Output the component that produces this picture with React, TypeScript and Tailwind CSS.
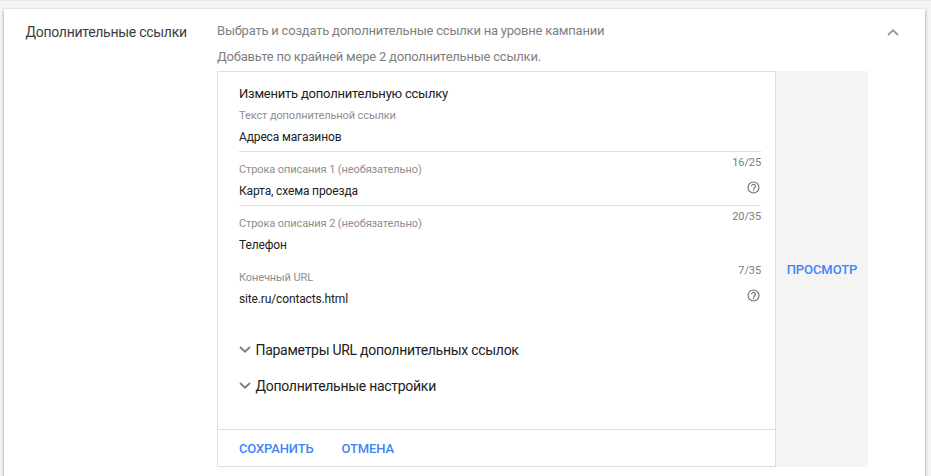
type FieldProps = {
  label: string;
  value: string;
  counter?: string;
  help?: boolean;
  line?: boolean;
};

function HelpIcon() {
  return (
    <svg className="h-[13px] w-[13px]" viewBox="0 0 13 13" fill="none" stroke="#6c6c6c">
      <circle cx="6.5" cy="6.5" r="5.5" strokeWidth="1.1" />
      <path d="M4.6 5.3a1.9 1.9 0 1 1 3.1 1.4c-.8.6-1.2 1-1.2 1.7" strokeWidth="1.1" />
      <path d="M6.5 9.1v1.1" strokeWidth="1.2" />
    </svg>
  );
}

function Chevron({ up = false }: { up?: boolean }) {
  return (
    <svg
      className={up ? "h-[7px] w-[12px] rotate-180" : "h-[7px] w-[12px]"}
      viewBox="0 0 12 7"
      fill="none"
      stroke={up ? "#9a9a9a" : "#7c7c7c"}
      strokeWidth="1.8"
    >
      <path d="M1 1l5 4.7 5-4.7" />
    </svg>
  );
}

function Field({ label, value, counter, help, line }: FieldProps) {
  return (
    <div className={`flex h-[54px] justify-between border-b ${line ? "border-[#dedede]" : "border-transparent"}`}>
      <div>
        <div className="mt-[10px] text-[11px] leading-4 tracking-[-0.1px] text-[#8e8e8e]">{label}</div>
        <div className="mt-[5px] text-[12px] leading-4 tracking-[-0.14px] text-[#212121]">{value}</div>
      </div>
      <div className="flex flex-col items-end">
        <div className="mt-[3px] h-4 text-[11px] leading-4 tracking-[-0.1px] text-[#7c7c7c]">{counter}</div>
        {help && (
          <div className="mt-[10px] mr-px">
            <HelpIcon />
          </div>
        )}
      </div>
    </div>
  );
}

function Expander({ title }: { title: string }) {
  return (
    <div className="flex h-9 items-center">
      <div className="-mt-[2px]">
        <Chevron />
      </div>
      <span className="ml-[4.5px] text-[14px] leading-5 tracking-[-0.28px] text-[#212121]">{title}</span>
    </div>
  );
}

export default function App() {
  return (
    <div className="h-[476px] w-[931px] overflow-hidden border-t border-[#e8e8e8] bg-[#f4f4f4] pt-2 pr-[6px] pl-1 font-['Roboto',sans-serif]">
      <div className="flex h-[480px] bg-white shadow-[0_1px_3px_rgba(0,0,0,0.4)]">
        <h2 className="w-[213px] pt-[13px] pl-[21.5px] text-[14px] leading-5 tracking-[-0.28px] text-[#3c3c3c]">Дополнительные ссылки</h2>
        <div className="w-[651px]">
          <p className="mt-[12px] text-[13px] leading-5 tracking-[-0.22px] text-[#808080]">Выбрать и создать дополнительные ссылки на уровне кампании</p>
          <p className="mt-[6px] text-[13px] leading-5 tracking-[-0.22px] text-[#808080]">Добавьте по крайней мере 2 дополнительные ссылки.</p>
          <div className="mt-[4px] flex h-[396px] bg-[#f4f4f4]">
            <div className="flex w-[559px] flex-col border border-[#dedede] bg-white">
              <div className="h-[357px] pr-[14px] pl-[21px]">
                <h3 className="pt-[12px] text-[13px] leading-5 tracking-[-0.22px] text-[#212121]">Изменить дополнительную ссылку</h3>
                <div className="-mt-[6px]">
                  <Field label="Текст дополнительной ссылки" value="Адреса магазинов" line />
                  <Field label="Строка описания 1 (необязательно)" value="Карта, схема проезда" counter="16/25" help line />
                  <Field label="Строка описания 2 (необязательно)" value="Телефон" counter="20/35" />
                  <Field label="Конечный URL" value="site.ru/contacts.html" counter="7/35" help />
                </div>
                <div className="mt-[18px]">
                  <Expander title="Параметры URL дополнительных ссылок" />
                  <Expander title="Дополнительные настройки" />
                </div>
              </div>
              <div className="flex flex-1 items-center gap-[28px] border-t border-[#dedede] pt-[2px] pl-[21px] text-[13px] font-medium tracking-[-0.14px] text-[#4285f4]">
                <button>СОХРАНИТЬ</button>
                <button>ОТМЕНА</button>
              </div>
            </div>
            <div className="flex flex-1 items-center justify-center pt-[2px] text-[13px] font-medium tracking-[-0.08px] text-[#4285f4]">
              <button>ПРОСМОТР</button>
            </div>
          </div>
        </div>
        <div className="pt-[20px] pl-[19px]">
          <Chevron up />
        </div>
      </div>
    </div>
  );
}
